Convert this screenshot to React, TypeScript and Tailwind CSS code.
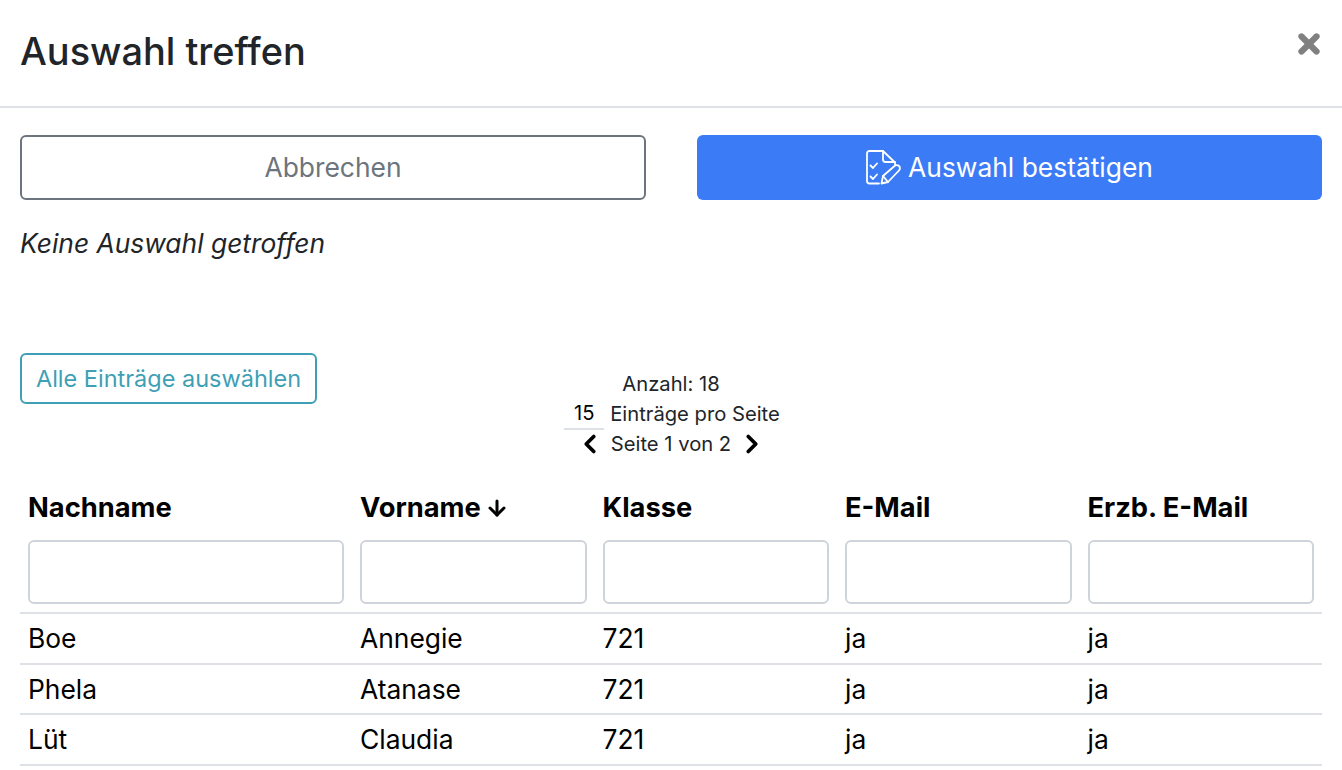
import React from "react";
import { ArrowDown, ChevronLeft, ChevronRight, X } from "lucide-react";

const columns = ["Nachname", "Vorname", "Klasse", "E-Mail", "Erzb. E-Mail"];

const rows = [
  ["Boe", "Annegie", "721", "ja", "ja"],
  ["Phela", "Atanase", "721", "ja", "ja"],
  ["Lüt", "Claudia", "721", "ja", "ja"],
];

function ConfirmIcon() {
  return (
    <svg width="35" height="35" viewBox="0 0 35 35" fill="none" stroke="currentColor" strokeWidth="1.8" strokeLinecap="round" strokeLinejoin="round">
      <path d="M13 33.500H3.500a2.500 2.500 0 0 1-2.500-2.500V3.500A2.500 2.500 0 0 1 3.500 1H17l12 11.500V15" />
      <path d="M17 1v8.500a2.500 2.500 0 0 0 2.500 2.500H29" />
      <path d="M4.500 15.500l2.500 2.500 4-4.500" />
      <path d="M4.500 26.500l2.500 2.500 4-4.500" />
      <path d="M15.500 33.500l1.500-7.500 11.500-10a3 3 0 0 1 4.500 4.500L22 32z" />
      <path d="M17 26l5 6" />
    </svg>
  );
}

export default function App() {
  return (
    <div className="h-[770px] overflow-hidden bg-white font-['Inter',sans-serif] text-[#212529]">
      {/* Header */}
      <div className="flex h-[108px] items-start justify-between border-b-2 border-[#dee2e6] pr-[18px] pl-5">
        <h1 className="mt-[26px] text-[37.900px] leading-[50px] font-medium">Auswahl treffen</h1>
        <X className="mt-[29px] text-[#808080]" size={30} strokeWidth={5} />
      </div>

      <div className="px-5 pt-[27px]">
        {/* Actions */}
        <div className="flex justify-between">
          <button className="h-[65px] w-[626px] rounded-md border-2 border-[#6c757d] text-[26.400px] text-[#6c757d]">
            Abbrechen
          </button>
          <button className="flex h-[65px] w-[625px] items-center justify-center gap-[7px] rounded-md bg-[#3b7cf6] text-[26.400px] text-white">
            <ConfirmIcon />
            Auswahl bestätigen
          </button>
        </div>

        <p className="mt-[26px] text-[26.400px] leading-[34px] italic">Keine Auswahl getroffen</p>

        {/* Pagination */}
        <div className="relative mt-[93px] h-[120px]">
          <button className="absolute top-0 left-0 h-[51px] w-[297px] rounded-md border-2 border-[#3f9fb5] text-[23.500px] text-[#3f9fb5]">
            Alle Einträge auswählen
          </button>
          <div className="flex flex-col items-center pt-[16px] text-[20.200px] leading-[30px]">
            <div className="h-[30px]">Anzahl: 18</div>
            <div className="ml-[2px] flex h-[30px] items-center gap-[6px]">
              <span className="w-[40px] border-b-2 border-[#dee2e6] text-center text-black">15</span>
              <span>Einträge pro Seite</span>
            </div>
            <div className="flex h-[30px] items-center gap-[6px]">
              <ChevronLeft size={30} strokeWidth={3} className="text-black" />
              <span>Seite 1 von 2</span>
              <ChevronRight size={30} strokeWidth={3} className="text-black" />
            </div>
          </div>
        </div>

        {/* Table */}
        <table className="w-full table-fixed border-collapse text-[26.400px] text-black">
          <colgroup>
            <col className="w-[332px]" />
            <col className="w-[242.500px]" />
            <col className="w-[242.500px]" />
            <col className="w-[242.500px]" />
            <col className="w-[242.500px]" />
          </colgroup>
          <thead>
            <tr>
              {columns.map((col) => (
                <th key={col} className="px-2 pt-[19px] pb-[16px] text-left text-[27.300px] leading-[32px] font-bold">
                  <span className="inline-flex items-center gap-[4px]">
                    {col}
                    {col === "Vorname" && <ArrowDown size={24} strokeWidth={3} />}
                  </span>
                </th>
              ))}
            </tr>
            <tr className="border-b-2 border-[#dee2e6]">
              {columns.map((col) => (
                <th key={col} className="px-2 pb-[8px]">
                  <input className="block h-[64px] w-full rounded-md border-2 border-[#ced4da] bg-white" />
                </th>
              ))}
            </tr>
          </thead>
          <tbody>
            {rows.map((row) => (
              <tr key={row[0]} className="border-b-2 border-[#dee2e6]">
                {row.map((cell, i) => (
                  <td key={i} className="h-[50.500px] px-2 leading-[32px]">
                    {cell}
                  </td>
                ))}
              </tr>
            ))}
          </tbody>
        </table>
      </div>
    </div>
  );
}
